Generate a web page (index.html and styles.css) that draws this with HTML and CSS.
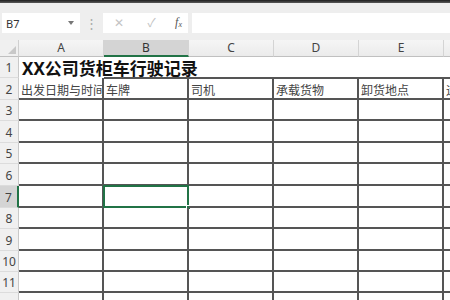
FILE: index.html
```html
<!DOCTYPE html>
<html lang="zh">
<head>
<meta charset="utf-8">
<link rel="stylesheet" href="styles.css">
</head>
<body>
<div class="app">
  <div class="topstrip"></div>
  <div class="toolbar">
    <div class="namebox"><span class="ref">B7</span><span class="caret"></span></div>
    <div class="dots">⋮</div>
    <div class="fbtns">
      <span class="fb x">✕</span>
      <span class="fb ok">✓</span>
      <span class="fb fx">f<sub>x</sub></span>
    </div>
    <div class="finput"></div>
  </div>
  <div class="sheet">
    <div class="corner"><span class="tri"></span></div>
    <div class="ch">A</div>
    <div class="ch sel">B</div>
    <div class="ch">C</div>
    <div class="ch">D</div>
    <div class="ch">E</div>
    <div class="ch last"></div>

    <div class="rh">1</div>
    <div class="title">XX公司货柜车行驶记录</div>

    <div class="rh">2</div>
    <div class="c hd">出发日期与时间</div>
    <div class="c hd">车牌</div>
    <div class="c hd">司机</div>
    <div class="c hd">承载货物</div>
    <div class="c hd">卸货地点</div>
    <div class="c hd f">运</div>

    <div class="rh">3</div><div class="c"></div><div class="c"></div><div class="c"></div><div class="c"></div><div class="c"></div><div class="c f"></div>
    <div class="rh">4</div><div class="c"></div><div class="c"></div><div class="c"></div><div class="c"></div><div class="c"></div><div class="c f"></div>
    <div class="rh">5</div><div class="c"></div><div class="c"></div><div class="c"></div><div class="c"></div><div class="c"></div><div class="c f"></div>
    <div class="rh">6</div><div class="c"></div><div class="c"></div><div class="c"></div><div class="c"></div><div class="c"></div><div class="c f"></div>
    <div class="rh sel">7</div><div class="c"></div><div class="c active"><span class="selbox"></span><span class="handle"></span></div><div class="c"></div><div class="c"></div><div class="c"></div><div class="c f"></div>
    <div class="rh">8</div><div class="c"></div><div class="c"></div><div class="c"></div><div class="c"></div><div class="c"></div><div class="c f"></div>
    <div class="rh">9</div><div class="c"></div><div class="c"></div><div class="c"></div><div class="c"></div><div class="c"></div><div class="c f"></div>
    <div class="rh">10</div><div class="c"></div><div class="c"></div><div class="c"></div><div class="c"></div><div class="c"></div><div class="c f"></div>
    <div class="rh">11</div><div class="c"></div><div class="c"></div><div class="c"></div><div class="c"></div><div class="c"></div><div class="c f"></div>
    <div class="rh"></div><div class="c"></div><div class="c"></div><div class="c"></div><div class="c"></div><div class="c"></div><div class="c f"></div>
  </div>
</div>
</body>
</html>
```
FILE: styles.css
```css
* { box-sizing: border-box; }
html, body { margin: 0; padding: 0; }
body {
  width: 450px;
  height: 300px;
  overflow: hidden;
  background: #ffffff;
  font-family: "Noto Sans", "Noto Sans CJK SC", sans-serif;
}
.app { width: 450px; height: 300px; overflow: hidden; }
.topstrip { height: 3px; background: linear-gradient(#1e1e1e, #5a5a5a); }
.toolbar {
  height: 37px;
  background: #eeeeee;
  display: flex;
  align-items: flex-start;
  padding-top: 10px;
  padding-left: 2px;
}
.namebox {
  width: 78px;
  height: 20px;
  background: #fff;
  display: flex;
  align-items: center;
  justify-content: space-between;
  padding: 0 6px 0 4px;
  font-size: 11px;
  color: #333;
}
.caret {
  width: 0; height: 0;
  border-left: 3px solid transparent;
  border-right: 3px solid transparent;
  border-top: 4px solid #777;
}
.dots {
  width: 23px;
  text-align: center;
  color: #aaa;
  font-size: 13px;
  line-height: 20px;
}
.fbtns {
  width: 85px;
  height: 20px;
  background: #fff;
  display: flex;
  align-items: center;
  justify-content: space-between;
  padding: 0 6px 0 11px;
}
.fb { font-size: 12px; color: #c4c4c4; line-height: 20px; }
.fb.ok { margin-left: 4px; }
.fb.fx {
  font-family: "Liberation Serif", serif;
  font-style: italic;
  color: #555;
  font-size: 12px;
}
.fb.fx sub { font-size: 8px; vertical-align: -1px; }
.finput {
  flex: 1;
  height: 20px;
  background: #fff;
  margin-left: 4px;
}
.sheet {
  display: grid;
  grid-template-columns: 19px 85px 85px 85px 85px 85px 1fr;
  grid-template-rows: 17px 21px 22px 21px 22px 21px 22px 22px 21px 22px 21px 21px 22px;
}
.corner {
  background: #f0f0f0;
  border-right: 1px solid #d0d0d0;
  border-bottom: 1px solid #c0c0c0;
  position: relative;
}
.tri {
  position: absolute;
  right: 2px; bottom: 2px;
  width: 0; height: 0;
  border-left: 8px solid transparent;
  border-bottom: 8px solid #c8c8c8;
}
.ch {
  background: linear-gradient(#f5f5f5, #ebebeb);
  border-right: 1px solid #d4d4d4;
  border-bottom: 1px solid #c0c0c0;
  text-align: center;
  font-size: 12px;
  line-height: 16px;
  color: #444;
}
.ch.sel {
  background: #d4d4d4;
  border-bottom: 2px solid #217346;
  color: #333;
}
.ch.last { border-right: none; }
.rh {
  background: #f0f0f0;
  border-right: 1px solid #c8c8c8;
  border-bottom: 1px solid #dcdcdc;
  text-align: center;
  font-size: 12px;
  color: #444;
  display: flex;
  align-items: flex-end;
  justify-content: center;
  line-height: 16px;
  padding-bottom: 1px;
}
.rh.sel {
  background: #d4d4d4;
  border-right: 2px solid #217346;
}
.title {
  grid-column: 2 / -1;
  font-weight: bold;
  font-size: 17px;
  line-height: 19px;
  padding-left: 3px;
  color: #111;
  white-space: nowrap;
  display: flex;
  align-items: flex-end;
  position: relative;
}
.title::after {
  content: "";
  position: absolute;
  left: 85px; right: 0; bottom: -1px;
  height: 2px;
  background: #555;
}
.c {
  border-right: 2px solid #555;
  border-bottom: 2px solid #555;
  position: relative;
}
.c.f { border-right: none; }
.hd {
  font-size: 12px;
  color: #444;
  white-space: nowrap;
  overflow: hidden;
  padding-left: 2px;
  display: flex;
  align-items: flex-end;
  line-height: 17px;
  font-family: "Noto Sans CJK SC", sans-serif;
}
.selbox {
  position: absolute;
  left: -1px; top: -1px; right: -2px; bottom: -2px;
  border: 2px solid #217346;
}
.handle {
  position: absolute;
  right: -4px; bottom: -4px;
  width: 5px; height: 5px;
  background: #217346;
  border: 1px solid #fff;
}
```
